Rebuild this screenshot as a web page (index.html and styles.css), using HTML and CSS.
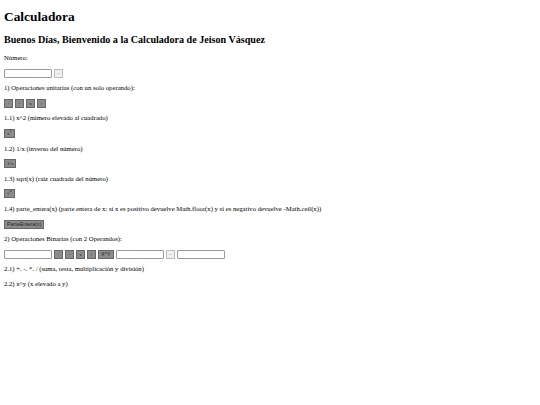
FILE: index.html
```html
<!DOCTYPE html>
<html lang="es">
<head>
<meta charset="utf-8">
<title>Calculadora</title>
<link rel="stylesheet" href="styles.css">
</head>
<body>
<h1 class="title">Calculadora</h1>
<h2 class="subtitle">Buenos Días, Bienvenido a la Calculadora de Jeison Vásquez</h2>
<p class="line">Número:</p>
<p class="row"><input class="field" type="text"><button class="btn light">=</button></p>
<p class="line">1) Operaciones unitarias (con un solo operando):</p>
<p class="row"><button class="btn">+</button><button class="btn">-</button><button class="btn">x</button><button class="btn">/</button></p>
<p class="line">1.1) x^2 (número elevado al cuadrado)</p>
<p class="row"><button class="btn">x<sup>2</sup></button></p>
<p class="line">1.2) 1/x (inverso del número)</p>
<p class="row"><button class="btn">1/x</button></p>
<p class="line">1.3) sqrt(x) (raiz cuadrada del número)</p>
<p class="row"><button class="btn">√<sup>x</sup></button></p>
<p class="line">1.4) parte_entera(x) (parte entera de x: si x es positivo devuelve Math.floor(x) y si es negativo devuelve -Math.ceil(x))</p>
<p class="row"><button class="btn sans">ParteEntera(x)</button></p>
<p class="line">2) Operaciones Binarias (con 2 Operandos):</p>
<p class="row"><input class="field" type="text"><button class="btn">+</button><button class="btn">-</button><button class="btn">x</button><button class="btn">/</button><button class="btn sans">X^Y</button><input class="field" type="text"><button class="btn light">=</button><input class="field" type="text"></p>
<p class="line">2.1) +. -. *. / (suma, resta, multiplicación y división)</p>
<p class="line">2.2) x^y (x elevado a y)</p>
</body>
</html>
```
FILE: styles.css
```css
html, body { background: #ffffff; }
body {
  margin: 4px;
  font-family: "Liberation Serif", "Times New Roman", serif;
  font-size: 6.7px;
  color: #000;
}
.title {
  font-size: 13.4px;
  margin: 5px 0 9px;
}
.subtitle {
  font-size: 10.1px;
  margin: 9px 0 9px;
}
.line {
  margin: 6.6px 0;
  line-height: 8px;
}
.row {
  margin: 6.6px 0;
  display: flex;
  align-items: center;
  gap: 2px;
  height: 9px;
}
.field {
  width: 48px;
  height: 9px;
  box-sizing: border-box;
  border: 1px solid #999;
  border-radius: 1px;
  padding: 0;
  margin: 0;
  background: #fff;
}
.btn {
  height: 9px;
  min-width: 9px;
  box-sizing: border-box;
  padding: 0 2px;
  margin: 0;
  font-family: "Liberation Serif", serif;
  font-size: 5px;
  line-height: 7px;
  background: #8c8c8c;
  border: 1px solid #666;
  border-radius: 0;
  color: #222;
}
.btn sup { font-size: 4px; line-height: 0; }
.btn.sans { font-family: "Liberation Sans", Arial, sans-serif; font-size: 5.3px; }
.btn.light {
  background: #efefef;
  border-color: #bbb;
  color: #777;
}
```
